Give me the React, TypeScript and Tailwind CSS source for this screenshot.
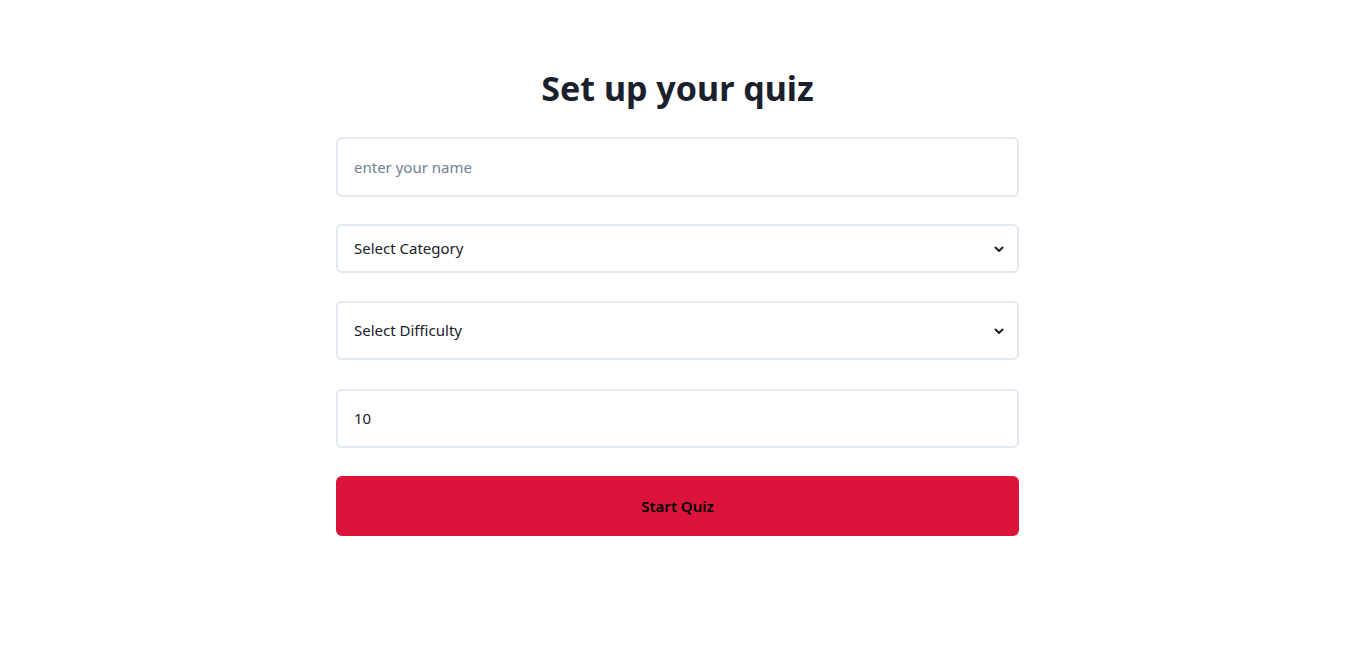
import React from "react";

function Chevron() {
  return (
    <svg width="12" height="12" viewBox="0 0 12 12" className="text-[#1a202c]">
      <path d="M2.5 4.5 L6 8 L9.5 4.5" fill="none" stroke="currentColor" strokeWidth="2" strokeLinecap="round" strokeLinejoin="round" />
    </svg>
  );
}

export default function App() {
  return (
    <div className="flex min-h-[654px] w-full justify-center bg-white pr-[4px] font-['Noto_Sans',sans-serif] text-[#1a202c]">
      <div className="flex w-[683px] flex-col pt-[64px]">
        <h1 className="mb-[25px] text-center text-[34px] font-bold leading-[48px] text-[#1a202c]">Set up your quiz</h1>
        <div className="flex h-[60px] items-center rounded-md border-2 border-[#e2e8f0] px-4 text-[15px] text-[#718096]">
          enter your name
        </div>
        <div className="mt-[27px] flex h-[49px] items-center justify-between rounded-md border-2 border-[#e2e8f0] pl-4 pr-[12px] text-[15px]">
          <span>Select Category</span>
          <Chevron />
        </div>
        <div className="mt-[28px] flex h-[59px] items-center justify-between rounded-md border-2 border-[#e2e8f0] pl-4 pr-[12px] text-[15px]">
          <span>Select Difficulty</span>
          <Chevron />
        </div>
        <div className="mt-[29px] flex h-[59px] items-center rounded-md border-2 border-[#e2e8f0] px-4 text-[15px]">
          10
        </div>
        <button className="mt-[28px] flex h-[60px] items-center justify-center rounded-md bg-[#dc143c] text-[15px] font-semibold text-black">
          Start Quiz
        </button>
      </div>
    </div>
  );
}
